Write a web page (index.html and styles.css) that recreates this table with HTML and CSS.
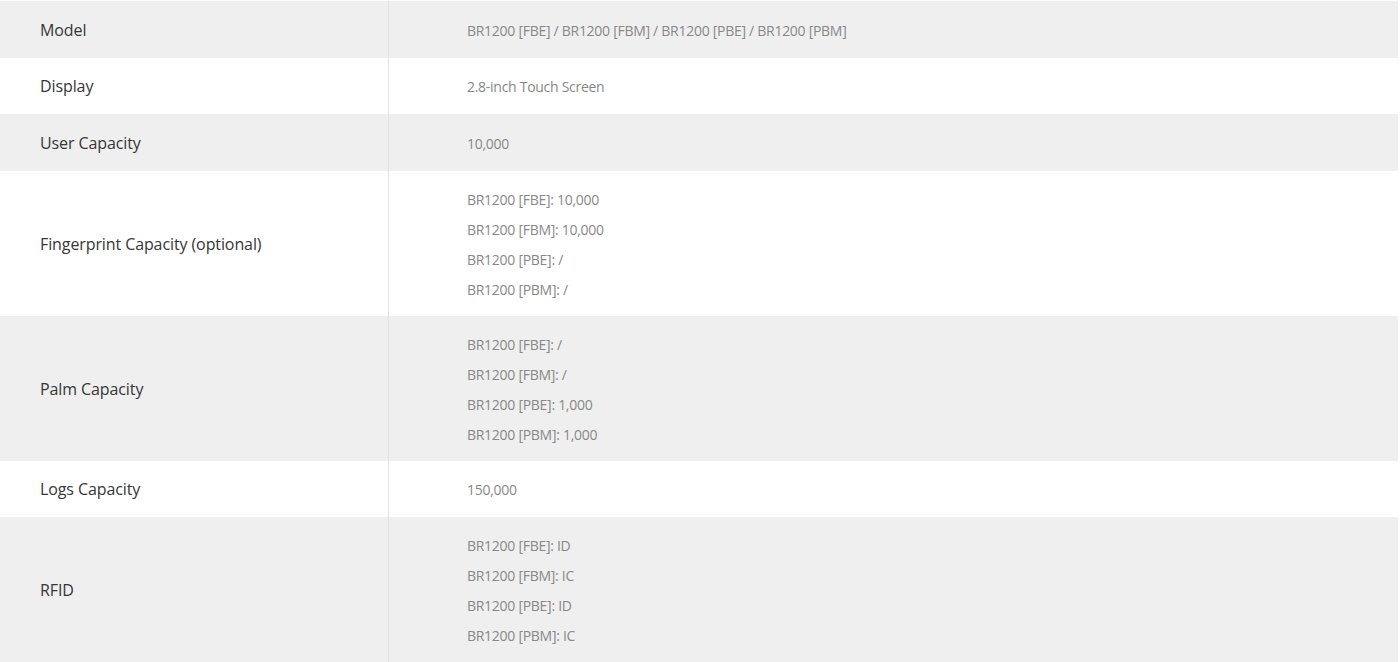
FILE: index.html
```html
<!DOCTYPE html>
<html>
<head>
<meta charset="utf-8">
<link rel="stylesheet" href="styles.css">
</head>
<body>
<table class="spec">
  <tr class="odd"><th>Model</th><td><p>BR1200 [FBE] / BR1200 [FBM] / BR1200 [PBE] / BR1200 [PBM]</p></td></tr>
  <tr><th>Display</th><td><p>2.8-inch Touch Screen</p></td></tr>
  <tr class="odd"><th>User Capacity</th><td><p>10,000</p></td></tr>
  <tr><th>Fingerprint Capacity (optional)</th><td><p>BR1200 [FBE]: 10,000</p><p>BR1200 [FBM]: 10,000</p><p>BR1200 [PBE]: /</p><p>BR1200 [PBM]: /</p></td></tr>
  <tr class="odd"><th>Palm Capacity</th><td><p>BR1200 [FBE]: /</p><p>BR1200 [FBM]: /</p><p>BR1200 [PBE]: 1,000</p><p>BR1200 [PBM]: 1,000</p></td></tr>
  <tr><th>Logs Capacity</th><td><p>150,000</p></td></tr>
  <tr class="odd"><th>RFID</th><td><p>BR1200 [FBE]: ID</p><p>BR1200 [FBM]: IC</p><p>BR1200 [PBE]: ID</p><p>BR1200 [PBM]: IC</p></td></tr>
</table>
</body>
</html>
```
FILE: styles.css
```css
html, body {
  margin: 0;
  padding: 0;
  background: #fff;
}
.spec {
  width: 1398px;
  margin-top: 1px;
  border-collapse: collapse;
  font-family: "Open Sans", "Noto Sans", sans-serif;
}
.spec tr {
  height: 56.5px;
}
.spec tr.odd {
  background: #efefef;
}
.spec th {
  width: 348px;
  padding: 1px 0 0 40px;
  text-align: left;
  font-weight: normal;
  font-size: 16px;
  letter-spacing: -0.1px;
  color: #363636;
  border-right: 1px solid #e3e3e3;
  vertical-align: middle;
}
.spec td {
  padding: 14px 0 11px 78px;
  font-size: 14px;
  letter-spacing: -0.28px;
  color: #888;
  vertical-align: middle;
}
.spec td p {
  margin: 0;
  line-height: 30px;
}
```
